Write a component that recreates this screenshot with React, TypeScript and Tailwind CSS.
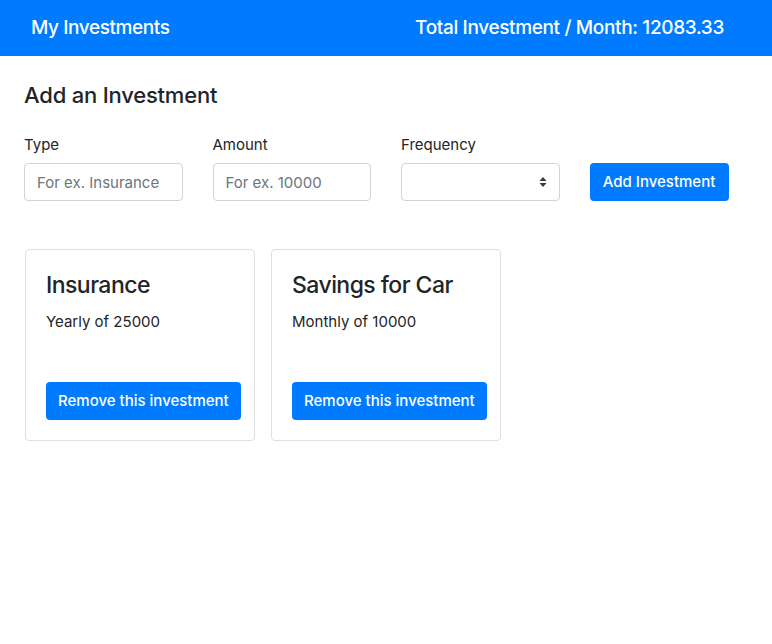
import { useState } from "react";

type Investment = {
    type: string
    amount: number
    frequency: string
}

const font = "font-['Inter','Noto_Sans',sans-serif]"

function SortArrows() {
    return (
        <svg width="8" height="12" viewBox="0 0 8 12" className="text-[#343a40]">
            <path d="M4 1 L7.5 5 L0.5 5 Z" fill="currentColor" />
            <path d="M4 11 L7.5 7 L0.5 7 Z" fill="currentColor" />
        </svg>
    )
}

function InvestmentCard({item, onRemove}: { item: Investment, onRemove: () => void }) {
    return (
        <div className="w-[230px] border border-[#dfdfdf] rounded-[4px] px-5 pt-5 pb-5">
            <h3 className="text-[23px] font-medium leading-[1.2] tracking-[-0.55px] text-[#212529] mt-[2px]">{item.type}</h3>
            <p className="text-[15px] leading-6 text-[#212529] mt-[10px]">
                {item.frequency} of {item.amount}
            </p>
            <button
                onClick={onRemove}
                className="mt-[48px] h-[38px] px-3 whitespace-nowrap bg-[#007bff] text-white text-[15px] rounded-[4px] font-medium">
                Remove this investment
            </button>
        </div>
    )
}

function App() {
    const [items, setItems] = useState<Investment[]>([
        {type: "Insurance", amount: 25000, frequency: "Yearly"},
        {type: "Savings for Car", amount: 10000, frequency: "Monthly"},
    ])

    return (
        <div className={`${font} min-h-[644px] bg-white text-[#212529]`}>
            <nav className="h-14 bg-[#007bff] flex items-center justify-between pl-[31px] pr-[48px]">
                <span className="text-white text-[19px] font-medium tracking-[-0.4px]">My Investments</span>
                <span className="text-white text-[19px] font-medium tracking-[-0.35px]">Total Investment / Month: 12083.33</span>
            </nav>

            <div className="px-6 pt-[26px]">
                <h4 className="text-[22px] font-medium leading-[1.2] tracking-[-0.2px]">Add an Investment</h4>

                <div className="flex items-end gap-[30px] mt-[25px]">
                    <div className="flex flex-col w-[158.5px]">
                        <label className="text-[15px] leading-6 mb-[6px]">Type</label>
                        <input
                            className="h-[38px] rounded-[4px] border border-[#ced4da] px-3 text-[15px] placeholder:text-[#6c757d] focus:outline-none"
                            placeholder="For ex. Insurance"
                        />
                    </div>
                    <div className="flex flex-col w-[158.5px]">
                        <label className="text-[15px] leading-6 mb-[6px]">Amount</label>
                        <input
                            className="h-[38px] rounded-[4px] border border-[#ced4da] px-3 text-[15px] placeholder:text-[#6c757d] focus:outline-none"
                            placeholder="For ex. 10000"
                        />
                    </div>
                    <div className="flex flex-col w-[158.5px]">
                        <label className="text-[15px] leading-6 mb-[6px]">Frequency</label>
                        <div className="h-[38px] rounded-[4px] border border-[#ced4da] flex items-center justify-end pr-[12px]">
                            <SortArrows />
                        </div>
                    </div>
                    <button className="w-[139px] h-[38px] rounded-[4px] bg-[#007bff] text-white text-[15px] font-medium">
                        Add Investment
                    </button>
                </div>

                <div className="flex gap-[16px] mt-[48px] ml-px">
                    {items.map((item, i) => (
                        <InvestmentCard
                            key={item.type}
                            item={item}
                            onRemove={() => setItems(items.filter((_, j) => j !== i))}
                        />
                    ))}
                </div>
            </div>
        </div>
    )
}

export default App
